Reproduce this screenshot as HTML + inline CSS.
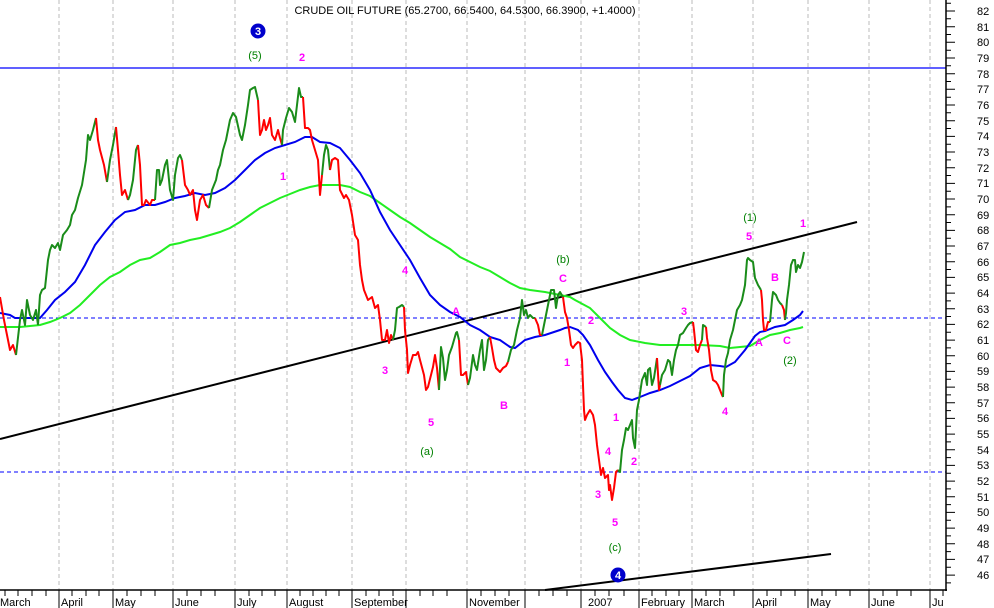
<!DOCTYPE html>
<html><head><meta charset="utf-8"><style>
html,body{margin:0;padding:0;background:#fff;}
svg{display:block;font-family:"Liberation Sans",sans-serif;}
.g{stroke:#1a8c1a;stroke-width:2;fill:none;stroke-linejoin:round}
.r{stroke:#ff0000;stroke-width:2;fill:none;stroke-linejoin:round}
.m{fill:#ff00ff;font-size:11px;font-weight:bold;text-anchor:middle}
.w{fill:#008000;font-size:11px;text-anchor:middle}
.yl{font-size:11px;fill:#000}
.xl{font-size:11px;fill:#000}
</style></head><body>
<svg width="994" height="608" viewBox="0 0 994 608" xmlns="http://www.w3.org/2000/svg">
<rect width="994" height="608" fill="#fff"/>
<g stroke="#bbb" stroke-dasharray="4,3" stroke-width="1">
<line x1="59" y1="0" x2="59" y2="590"/><line x1="113" y1="0" x2="113" y2="590"/><line x1="173" y1="0" x2="173" y2="590"/><line x1="235" y1="0" x2="235" y2="590"/><line x1="287" y1="0" x2="287" y2="590"/><line x1="352" y1="0" x2="352" y2="590"/><line x1="406" y1="0" x2="406" y2="590"/><line x1="467" y1="0" x2="467" y2="590"/><line x1="525" y1="0" x2="525" y2="590"/><line x1="581" y1="0" x2="581" y2="590"/><line x1="639" y1="0" x2="639" y2="590"/><line x1="692" y1="0" x2="692" y2="590"/><line x1="753" y1="0" x2="753" y2="590"/><line x1="808" y1="0" x2="808" y2="590"/><line x1="869" y1="0" x2="869" y2="590"/><line x1="930" y1="0" x2="930" y2="590"/>
</g>
<line x1="0" y1="68" x2="946" y2="68" stroke="#0000ff" stroke-width="1.2"/>
<line x1="0" y1="318" x2="946" y2="318" stroke="#0000ff" stroke-dasharray="4,3"/>
<line x1="0" y1="472" x2="946" y2="472" stroke="#0000ff" stroke-dasharray="4,3"/>
<line x1="0" y1="439" x2="857" y2="222" stroke="#000" stroke-width="2"/>
<line x1="545" y1="590" x2="831" y2="554" stroke="#000" stroke-width="2"/>
<!-- green MA -->
<polyline fill="none" stroke="#22ee22" stroke-width="2" points="0,327 20,327 40,325 50,322 60,318 70,313 80,305 90,295 100,285 110,277 120,272 130,265 140,260 150,258 160,252 170,245 180,243 190,240 200,238 210,235 220,232 230,228 240,222 250,215 260,208 270,203 280,198 290,194 300,190 310,187 320,185 330,185 340,185 350,187 360,192 370,196 380,203 390,210 400,217 410,223 420,230 430,237 440,243 450,249 460,257 470,262 480,267 490,271 500,277 510,283 520,288 530,290 545,292 560,295 570,297 575,300 590,308 600,318 610,328 620,335 630,340 645,343 660,345 680,345 700,345 720,346 730,348 740,347 750,346 760,340 770,335 780,333 790,330 800,328 803,327"/>
<!-- blue MA -->
<polyline fill="none" stroke="#0000ee" stroke-width="2" points="0,313 10,315 15,318 25,318 40,318 47,310 55,300 65,292 75,282 85,265 95,245 105,232 115,220 125,212 135,210 145,205 155,205 165,202 175,198 185,196 195,193 205,195 215,193 225,188 235,180 245,170 255,160 265,153 275,148 285,145 295,142 305,137 312,137 320,142 330,143 340,148 350,160 360,173 370,190 380,212 390,230 400,245 410,260 420,278 430,295 440,305 450,312 460,317 470,325 480,330 490,337 500,340 510,347 515,348 525,340 535,337 545,335 560,330 565,328 570,327 578,330 583,335 590,345 598,360 605,372 612,382 618,390 625,398 632,400 640,397 650,393 660,390 670,386 680,381 690,376 700,368 710,365 720,366 726,367 735,362 745,350 755,336 760,332 765,331 775,327 785,325 793,320 800,315 803,311"/>
<!-- price -->
<polyline class="r" points="0,297 4,320 8,340 10,350 13,345 16,355"/>
<polyline class="g" points="16,355 20,320 22,310 25,325 27,300 30,315 33,320 36,310 38,325"/>
<polyline class="g" points="38,325 40,295 42,290 45,288 48,260 50,250 52,245 55,248 58,243 60,250 63,235 67,230 70,225 72,215 75,210 78,198 82,185 86,160 88,135 90,140 93,130 96,118"/>
<polyline class="r" points="96,118 98,140 100,150 104,165 107,182"/>
<polyline class="g" points="107,182 110,160 113,145 116,127"/>
<polyline class="r" points="116,127 118,150 120,175 122,195 125,190 128,200"/>
<polyline class="g" points="128,200 130,195 133,180 136,150 138,145"/>
<polyline class="r" points="138,145 140,165 142,205 144,205 146,200 150,205 152,200 155,200"/>
<polyline class="g" points="155,200 157,170 159,170 160,185 162,180 165,165 167,160 170,190 173,200 175,175 178,158 180,155 182,160"/>
<polyline class="r" points="182,160 185,185 188,190 190,195 193,190 195,210 197,220 200,200 203,195 206,205 209,208"/>
<polyline class="g" points="209,208 212,190 216,180 218,170 220,165 223,150 226,140 230,120 233,113 236,117 240,135 242,140 245,125 248,105 250,90 253,88 255,87 258,100"/>
<polyline class="r" points="258,100 259,118 260,135 262,130 264,120 266,130 268,125 270,118 272,135 275,140 278,130 280,138 282,145"/>
<polyline class="g" points="282,145 283,130 286,118 289,108 292,112 295,122 297,105 299,88 301,97 303,97"/>
<polyline class="r" points="303,97 305,128 308,128 310,130 312,140 315,150 318,160 320,195 322,175"/>
<polyline class="g" points="322,175 324,155 326,145 328,150 330,170"/>
<polyline class="r" points="330,170 332,160 335,158 338,160 340,190 344,198 346,195 349,200 352,215 355,235 358,240 360,265 362,280 364,290 366,295 368,300 372,297 375,308 378,305 380,320 382,340 385,340 387,330 389,343 391,335 393,340"/>
<polyline class="g" points="393,340 395,330 397,308 399,307 402,305 404,307"/>
<polyline class="r" points="404,307 405,330 407,350 408,373 410,365 413,355 416,355 418,352 420,360 424,375 426,390 428,387 431,375 433,367 435,355 437,368 439,390"/>
<polyline class="g" points="439,390 441,347 443,358 445,380 447,370 449,355 452,347 454,340 456,333 457,332 459,340"/>
<polyline class="r" points="459,340 461,375 463,375 466,372 468,385"/>
<polyline class="g" points="468,385 470,378 473,355 475,365 477,370 480,350 482,340 484,370 486,360 488,340 490,337"/>
<polyline class="r" points="490,337 492,348 494,360 496,368 500,372 503,368 506,366 508,362"/>
<polyline class="g" points="508,362 511,350 514,345 517,330 520,318 522,300 524,315 526,310 528,318 530,315 533,318 535,318"/>
<polyline class="r" points="535,318 538,325 540,335 542,335"/>
<polyline class="g" points="542,335 545,320 548,305 551,290 554,290 556,308 558,295 560,292 563,297"/>
<polyline class="r" points="563,297 565,312 567,318 569,330 571,345 573,348 575,345 578,342 580,343 582,360 584,410 585,420 587,415 590,410 593,415 595,425 597,445 599,460 601,475 603,468 605,478 608,475 609,490 610,485 612,500 614,488 616,472 618,470"/>
<polyline class="g" points="618,470 620,472 622,450 624,440 626,428 628,430 630,425 632,420 633,438 635,448 637,410 639,400 642,380 645,373 647,385 648,370 650,368 652,385 654,378 657,358"/>
<polyline class="r" points="657,358 659,390 660,385"/>
<polyline class="g" points="660,385 662,375 665,370 668,360 670,362 672,375 674,360 676,350 678,345 680,335 683,333 686,328 688,325 690,323 693,322"/>
<polyline class="r" points="693,322 694,330 696,350 698,352 700,345 702,340"/>
<polyline class="g" points="702,340 703,325 706,327"/>
<polyline class="r" points="706,327 707,338 709,350 711,370 713,380 716,382 718,385 720,390 722,395 723,397"/>
<polyline class="g" points="723,397 724,375 726,360 728,353 730,340 733,330 735,320 737,310 740,305 742,300 745,285 747,260 748,258 750,260 753,262 755,278 758,285 761,290"/>
<polyline class="r" points="761,290 762,300 763,320 764,330 766,330 768,322 770,322"/>
<polyline class="g" points="770,322 772,300 773,292 776,295 778,300 780,303 782,305"/>
<polyline class="r" points="782,305 784,310 785,320"/>
<polyline class="g" points="785,320 786,313 787,300 789,285 791,265 793,260 795,260 796,272 798,265 800,268 802,262 804,252"/>
<!-- labels -->
<text x="465" y="14" font-size="11" text-anchor="middle">CRUDE OIL FUTURE (65.2700, 66.5400, 64.5300, 66.3900, +1.4000)</text>
<circle cx="258" cy="31" r="7.5" fill="#0000cc"/><text x="258" y="35" font-size="11" font-weight="bold" fill="#fff" text-anchor="middle">3</text>
<circle cx="618" cy="575" r="7.5" fill="#0000cc"/><text x="618" y="579" font-size="11" font-weight="bold" fill="#fff" text-anchor="middle">4</text>
<text class="w" x="255" y="59">(5)</text><text class="w" x="427" y="455">(a)</text><text class="w" x="563" y="263">(b)</text><text class="w" x="615" y="551">(c)</text><text class="w" x="750" y="221">(1)</text><text class="w" x="790" y="364">(2)</text>
<text class="m" x="302" y="61">2</text><text class="m" x="283" y="180">1</text><text class="m" x="405" y="274">4</text><text class="m" x="385" y="374">3</text><text class="m" x="431" y="426">5</text><text class="m" x="456" y="315">A</text><text class="m" x="504" y="409">B</text><text class="m" x="563" y="282">C</text><text class="m" x="591" y="324">2</text><text class="m" x="567" y="366">1</text><text class="m" x="598" y="498">3</text><text class="m" x="608" y="455">4</text><text class="m" x="615" y="526">5</text><text class="m" x="616" y="421">1</text><text class="m" x="634" y="465">2</text><text class="m" x="684" y="315">3</text><text class="m" x="725" y="415">4</text><text class="m" x="749" y="240">5</text><text class="m" x="759" y="346">A</text><text class="m" x="775" y="281">B</text><text class="m" x="787" y="344">C</text><text class="m" x="803" y="227">1</text>
<!-- axes -->
<line x1="946" y1="0" x2="946" y2="591" stroke="#000" stroke-width="1.5"/>
<line x1="0" y1="590" x2="947" y2="590" stroke="#000" stroke-width="1.5"/>
<g stroke="#000" stroke-width="1">
<path d="M946 11H955M946 26.7H955M946 42.3H955M946 58H955M946 73.7H955M946 89.3H955M946 105H955M946 120.7H955M946 136.4H955M946 152H955M946 167.7H955M946 183.4H955M946 199H955M946 214.7H955M946 230.4H955M946 246H955M946 261.7H955M946 277.4H955M946 293.1H955M946 308.7H955M946 324.4H955M946 340.1H955M946 355.7H955M946 371.4H955M946 387.1H955M946 402.7H955M946 418.4H955M946 434.1H955M946 449.7H955M946 465.4H955M946 481.1H955M946 496.8H955M946 512.4H955M946 528.1H955M946 543.8H955M946 559.4H955M946 575.1H955"/>
<path d="M946 3.2H951M946 18.8H951M946 34.5H951M946 50.2H951M946 65.8H951M946 81.5H951M946 97.2H951M946 112.8H951M946 128.5H951M946 144.2H951M946 159.9H951M946 175.5H951M946 191.2H951M946 206.9H951M946 222.5H951M946 238.2H951M946 253.9H951M946 269.5H951M946 285.2H951M946 300.9H951M946 316.5H951M946 332.2H951M946 347.9H951M946 363.6H951M946 379.2H951M946 394.9H951M946 410.6H951M946 426.2H951M946 441.9H951M946 457.6H951M946 473.2H951M946 488.9H951M946 504.6H951M946 520.2H951M946 535.9H951M946 551.6H951M946 567.2H951M946 582.9H951"/>
<path d="M59 590V608M113 590V608M173 590V608M235 590V608M287 590V608M352 590V608M406 590V608M467 590V608M525 590V608M581 590V608M639 590V608M692 590V608M753 590V608M808 590V608M869 590V608M930 590V608"/>
<path d="M5 590V596M18 590V596M32 590V596M46 590V596M72 590V596M86 590V596M99 590V596M127 590V596M141 590V596M155 590V596M187 590V596M201 590V596M215 590V596M249 590V596M262 590V596M275 590V596M300 590V596M313 590V596M326 590V596M339 590V596M366 590V596M379 590V596M393 590V596M420 590V596M433 590V596M447 590V596M481 590V596M495 590V596M509 590V596M539 590V596M553 590V596M567 590V596M595 590V596M609 590V596M624 590V596M652 590V596M666 590V596M679 590V596M706 590V596M720 590V596M734 590V596M767 590V596M781 590V596M795 590V596M822 590V596M836 590V596M850 590V596M883 590V596M897 590V596M911 590V596M943 590V596"/>
</g>
<g class="yl">
<text x="977" y="15">82</text><text x="977" y="31">81</text><text x="977" y="46">80</text><text x="977" y="62">79</text><text x="977" y="78">78</text><text x="977" y="93">77</text><text x="977" y="109">76</text><text x="977" y="125">75</text><text x="977" y="140">74</text><text x="977" y="156">73</text><text x="977" y="172">72</text><text x="977" y="187">71</text><text x="977" y="203">70</text><text x="977" y="219">69</text><text x="977" y="234">68</text><text x="977" y="250">67</text><text x="977" y="266">66</text><text x="977" y="281">65</text><text x="977" y="297">64</text><text x="977" y="313">63</text><text x="977" y="328">62</text><text x="977" y="344">61</text><text x="977" y="360">60</text><text x="977" y="375">59</text><text x="977" y="391">58</text><text x="977" y="407">57</text><text x="977" y="422">56</text><text x="977" y="438">55</text><text x="977" y="454">54</text><text x="977" y="469">53</text><text x="977" y="485">52</text><text x="977" y="501">51</text><text x="977" y="516">50</text><text x="977" y="532">49</text><text x="977" y="548">48</text><text x="977" y="563">47</text><text x="977" y="579">46</text>
</g>
<g class="xl">
<text x="0" y="606">March</text><text x="61" y="606">April</text><text x="115" y="606">May</text><text x="175" y="606">June</text><text x="237" y="606">July</text><text x="289" y="606">August</text><text x="354" y="606">September</text><text x="469" y="606">November</text><text x="588" y="606">2007</text><text x="641" y="606">February</text><text x="694" y="606">March</text><text x="755" y="606">April</text><text x="810" y="606">May</text><text x="871" y="606">June</text><text x="932" y="606">Ju</text>
</g>
</svg>
</body></html>
